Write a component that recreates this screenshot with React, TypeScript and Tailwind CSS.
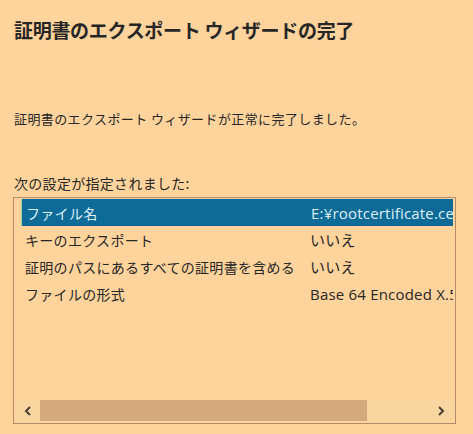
import React from "react";

const rows = [
  { k: "ファイル名", v: "E:¥rootcertificate.cer", sel: true },
  { k: "キーのエクスポート", v: "いいえ" },
  { k: "証明のパスにあるすべての証明書を含める", v: "いいえ" },
  { k: "ファイルの形式", v: "Base 64 Encoded X.509 (.CER)" },
];

export default function App() {
  return (
    <div
      className="w-[473px] h-[434px] bg-[#fed49c] text-[#262626] overflow-hidden"
      style={{ fontFamily: '"Noto Sans CJK JP", "Noto Sans", sans-serif' }}
    >
      <div className="pl-[14px] pt-[17px]">
        <div className="text-[19px] font-bold leading-[26px] tracking-[-0.3px]">
          証明書のエクスポート ウィザードの完了
        </div>
        <div className="mt-[67px] text-[13px] leading-[18px] tracking-[0.4px]">
          証明書のエクスポート ウィザードが正常に完了しました。
        </div>
        <div className="mt-[46px] text-[14px] leading-[18px] tracking-[0.3px]">
          次の設定が指定されました:
        </div>
      </div>
      <div className="ml-[13px] mt-[5px] w-[443px] h-[227px] border border-[#b08e6c] flex flex-col">
        <div className="flex-1 pt-[1px] pl-[7px] pr-[2px] overflow-hidden">
          {rows.map((r, i) => (
            <div
              key={i}
              className={
                "flex h-[27px] items-center pt-[2px] text-[14px] whitespace-nowrap overflow-hidden " +
                (r.sel ? "bg-[#0e6b98] text-[#dfeef5] border-l border-[#9ed49a]" : "")
              }
            >
              <div className="w-[289px] pl-[4px] shrink-0 tracking-[0.3px]">{r.k}</div>
              <div
                className="text-[15px] tracking-[0.2px]"
                style={{ fontFamily: '"Open Sans", "Noto Sans CJK JP", sans-serif' }}
              >
                {r.v}
              </div>
            </div>
          ))}
        </div>
        <div className="h-[21px] mx-[2px] mb-[2px] flex bg-[#f9d6a0]">
          <div className="w-[24px] flex items-center justify-center">
            <svg width="8" height="10" viewBox="0 0 8 10">
              <path d="M6 1 L2 5 L6 9" fill="none" stroke="#4a4035" strokeWidth="2" />
            </svg>
          </div>
          <div className="w-[327px] bg-[#d4aa7c]" />
          <div className="flex-1" />
          <div className="w-[24px] flex items-center justify-center">
            <svg width="8" height="10" viewBox="0 0 8 10">
              <path d="M2 1 L6 5 L2 9" fill="none" stroke="#4a4035" strokeWidth="2" />
            </svg>
          </div>
        </div>
      </div>
    </div>
  );
}
